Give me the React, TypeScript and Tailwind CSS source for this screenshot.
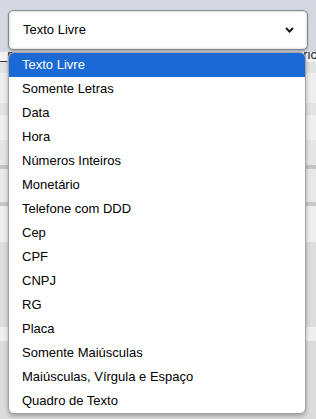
import React from "react";

const options = [
  "Texto Livre",
  "Somente Letras",
  "Data",
  "Hora",
  "Números Inteiros",
  "Monetário",
  "Telefone com DDD",
  "Cep",
  "CPF",
  "CNPJ",
  "RG",
  "Placa",
  "Somente Maiúsculas",
  "Maiúsculas, Vírgula e Espaço",
  "Quadro de Texto",
];

export default function App() {
  return (
    <div
      className="relative w-[316px] h-[419px] overflow-hidden bg-[#e4e4e4] text-[13px] text-black"
      style={{ fontFamily: '"Liberation Sans", Arial, sans-serif' }}
    >
      {/* background page */}
      <div className="flex flex-col">
        <div className="h-[52px] bg-[#d3d8e1] pt-[10px] px-[8px]">
          <div className="h-[40px] rounded-[5px] border border-[#8a8a8a] bg-white shadow-[inset_0_0_3px_rgba(0,0,0,0.25),0_1px_2px_rgba(0,0,0,0.3)] flex items-center justify-between pl-[14px] pr-[13px]">
            <span>Texto Livre</span>
            <svg width="9" height="6" viewBox="0 0 9 6">
              <path d="M1 1 L4.5 4.6 L8 1" fill="none" stroke="#111" strokeWidth="1.9" />
            </svg>
          </div>
        </div>
        <div className="h-[10px] bg-[#f4f4f4] flex justify-between overflow-hidden leading-[14px] text-[13px] text-[#222]">
          <span className="-mt-[4px]">_h</span>
          <span className="-mt-[4px] mr-[-1px]">ric</span>
        </div>
        <div className="h-[11px] bg-[#e2e2e2]" />
        <div className="h-[30px] bg-[#eeeeee]" />
        <div className="h-[12px] bg-[#e3e3e3]" />
        <div className="h-[25px] bg-[#efefef]" />
        <div className="h-[25px] bg-[#e6e6e6]" />
        <div className="h-[4px] bg-[#c4c4c4]" />
        <div className="h-[33px] bg-[#e9e9e9]" />
        <div className="h-[4px] bg-[#c8c8c8]" />
        <div className="h-[36px] bg-[#eeeeee]" />
        <div className="h-[85px] bg-[#dddddd]" />
        <div className="h-[14px] bg-[#efefef]" />
        <div className="h-[80px] bg-[#dcdcdc]" />
      </div>

      {/* dropdown list */}
      <div className="absolute left-[8px] top-[52px] w-[298px] rounded-[6px] border border-[#a3a3a3] bg-white shadow-[0_2px_4px_rgba(0,0,0,0.3)] overflow-hidden">
        {options.map((o, i) => (
          <div
            key={o}
            className={
              "h-[24px] flex items-center pl-[13px] " +
              (i === 0 ? "bg-[#1a69d4] text-white" : "text-black")
            }
          >
            {o}
          </div>
        ))}
      </div>
    </div>
  );
}
